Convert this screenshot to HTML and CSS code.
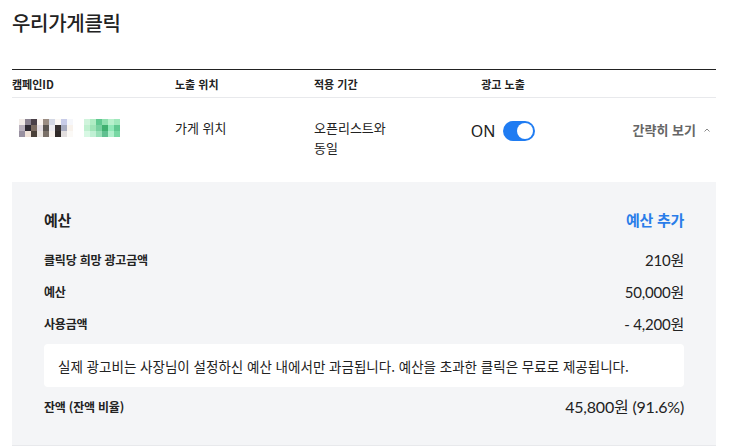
FILE: index.html
```html
<!DOCTYPE html>
<html lang="ko">

<head>
  <meta charset="UTF-8">
  <meta name="viewport" content="width=device-width, initial-scale=1">
  <title>우리가게클릭</title>
  <link rel="stylesheet" href="styles.css">
</head>

<body>
  <div id="page">
    <h1 class="title">우리가게클릭</h1>

    <div class="campaign">
      <div class="row head">
        <div>캠페인ID</div>
        <div>노출 위치</div>
        <div>적용 기간</div>
        <div class="center">광고 노출</div>
        <div></div>
      </div>

      <div class="row item">
        <div class="cid">
          <svg width="108" height="18" viewBox="0 0 108 18" aria-label="캠페인ID">
            <g>
              <rect x="0" y="0" width="6" height="6" fill="#f2ece8" />
              <rect x="6" y="0" width="6" height="6" fill="#8a8290" />
              <rect x="12" y="0" width="6" height="6" fill="#4a4048" />
              <rect x="18" y="0" width="6" height="6" fill="#faf4f0" />
              <rect x="24" y="0" width="6" height="6" fill="#9a8c82" />
              <rect x="30" y="0" width="6" height="6" fill="#d4d8e4" />
              <rect x="36" y="0" width="6" height="6" fill="#fbf8f5" />
              <rect x="42" y="0" width="6" height="6" fill="#c8cce8" />
              <rect x="48" y="0" width="6" height="6" fill="#f6f7fb" />
              <rect x="0" y="6" width="6" height="6" fill="#b8b0bc" />
              <rect x="6" y="6" width="6" height="6" fill="#2c2830" />
              <rect x="12" y="6" width="6" height="6" fill="#7a6a60" />
              <rect x="18" y="6" width="6" height="6" fill="#e4dee4" />
              <rect x="24" y="6" width="6" height="6" fill="#5a5450" />
              <rect x="30" y="6" width="6" height="6" fill="#ecebf0" />
              <rect x="36" y="6" width="6" height="6" fill="#363030" />
              <rect x="42" y="6" width="6" height="6" fill="#a8acc0" />
              <rect x="48" y="6" width="6" height="6" fill="#f8f2ec" />
              <rect x="0" y="12" width="6" height="6" fill="#9890a0" />
              <rect x="6" y="12" width="6" height="6" fill="#f0e2d8" />
              <rect x="12" y="12" width="6" height="6" fill="#4a4038" />
              <rect x="18" y="12" width="6" height="6" fill="#ede8e4" />
              <rect x="24" y="12" width="6" height="6" fill="#7a7068" />
              <rect x="30" y="12" width="6" height="6" fill="#f6f1ec" />
              <rect x="36" y="12" width="6" height="6" fill="#2e2826" />
              <rect x="42" y="12" width="6" height="6" fill="#e2dede" />
              <rect x="48" y="12" width="6" height="6" fill="#fbf9f6" />
            </g>
            <g transform="translate(65 0)">
              <rect x="0" y="0" width="6" height="6" fill="#d0f4dc" />
              <rect x="6" y="0" width="6" height="6" fill="#b0ecc4" />
              <rect x="12" y="0" width="6" height="6" fill="#60c890" />
              <rect x="18" y="0" width="6" height="6" fill="#90e0b0" />
              <rect x="24" y="0" width="6" height="6" fill="#b8f0cc" />
              <rect x="30" y="0" width="6" height="6" fill="#a0e8bc" />
              <rect x="0" y="6" width="6" height="6" fill="#c0f0d0" />
              <rect x="6" y="6" width="6" height="6" fill="#a0e4b8" />
              <rect x="12" y="6" width="6" height="6" fill="#78d0a0" />
              <rect x="18" y="6" width="6" height="6" fill="#40b070" />
              <rect x="24" y="6" width="6" height="6" fill="#90e8b8" />
              <rect x="30" y="6" width="6" height="6" fill="#60c890" />
              <rect x="0" y="12" width="6" height="6" fill="#d8f8e4" />
              <rect x="6" y="12" width="6" height="6" fill="#c0f0d4" />
              <rect x="12" y="12" width="6" height="6" fill="#98e0b8" />
              <rect x="18" y="12" width="6" height="6" fill="#60c090" />
              <rect x="24" y="12" width="6" height="6" fill="#b0f0cc" />
              <rect x="30" y="12" width="6" height="6" fill="#78d8a4" />
            </g>
          </svg>
        </div>
        <div>가게 위치</div>
        <div class="period">오픈리스트와<br>동일</div>
        <div class="exposure">
          <span class="on-label">ON</span>
          <span class="toggle"><span class="knob"></span></span>
        </div>
        <div class="fold">
          간략히 보기
          <svg width="6" height="4" viewBox="0 0 6 4">
            <polyline points="0.5,3.5 3,1 5.5,3.5" fill="none" stroke="#888" stroke-width="1" />
          </svg>
        </div>
      </div>

      <div class="budget">
        <div class="budget-head">
          <span>예산</span>
          <span class="add">예산 추가</span>
        </div>
        <div class="line">
          <span class="label">클릭당 희망 광고금액</span>
          <span class="value">210원</span>
        </div>
        <div class="line">
          <span class="label">예산</span>
          <span class="value">50,000원</span>
        </div>
        <div class="line">
          <span class="label">사용금액</span>
          <span class="value">- 4,200원</span>
        </div>
        <div class="notice">실제 광고비는 사장님이 설정하신 예산 내에서만 과금됩니다. 예산을 초과한 클릭은 무료로 제공됩니다.</div>
        <div class="line balance">
          <span class="label">잔액 (잔액 비율)</span>
          <span class="value">45,800원 (91.6%)</span>
        </div>
      </div>
    </div>
  </div>
</body>

</html>
```

FILE: styles.css
```css
:root {
  --text: #222;
  --blue: #2a7de9;
  --panel: #f4f5f7;
  --line: #e8e9ec;
}

* {
  box-sizing: border-box;
}

body {
  margin: 0;
  font-family: 'Noto Sans CJK KR', 'Noto Sans', sans-serif;
  color: var(--text);
  background-color: #fff;
}

#page {
  padding: 0 14px 0 12px;
}

.title {
  margin: 0;
  padding-top: 8px;
  font-size: 20px;
  line-height: 30px;
  font-weight: 500;
  letter-spacing: -0.3px;
}

.campaign {
  margin-top: 31px;
  border-top: 1px solid #222;
}

.row {
  display: grid;
  grid-template-columns: 163px 139px 126px 126px 1fr;
  align-items: start;
}

.row.head {
  height: 28px;
  align-items: center;
  border-bottom: 1px solid var(--line);
  font-size: 11px;
  font-weight: 700;
  letter-spacing: 0;
}

.center {
  text-align: center;
}

.row.item {
  padding: 20px 0 24px;
  font-size: 13px;
  line-height: 20px;
}

.cid {
  padding-left: 7px;
  height: 20px;
  display: flex;
  align-items: center;
}

.cid svg {
  display: block;
}

.exposure {
  display: flex;
  justify-content: center;
  align-items: center;
  gap: 8px;
  height: 22px;
  margin-top: 2px;
}

.on-label {
  font-family: 'Noto Sans', sans-serif;
  font-size: 16px;
}

.toggle {
  width: 32px;
  height: 20px;
  border-radius: 10px;
  background-color: #1f7cf2;
  display: flex;
  justify-content: flex-end;
  align-items: center;
  padding: 2px;
}

.knob {
  width: 16px;
  height: 16px;
  border-radius: 50%;
  background-color: #fff;
}

.fold {
  display: flex;
  justify-content: flex-end;
  align-items: center;
  gap: 8px;
  padding-right: 6px;
  margin-top: 2px;
  font-weight: 700;
  color: #666;
}

.budget {
  background-color: var(--panel);
  border-bottom: 1px solid var(--line);
  padding: 24px 32px 23px;
}

.budget-head {
  display: flex;
  justify-content: space-between;
  align-items: center;
  height: 26px;
  margin-bottom: 11px;
  font-size: 15px;
  font-weight: 700;
  letter-spacing: -0.3px;
}

.add {
  color: var(--blue);
}

.line {
  display: flex;
  justify-content: space-between;
  align-items: center;
  height: 32px;
}

.label {
  font-size: 12px;
  font-weight: 700;
  letter-spacing: -0.2px;
}

.value {
  font-family: Lato, 'Noto Sans CJK KR', sans-serif;
  font-size: 15px;
  letter-spacing: -0.2px;
}

.notice {
  margin: 5px 0 3px;
  background-color: #fff;
  border-radius: 4px;
  height: 43px;
  padding: 0 14px;
  display: flex;
  align-items: center;
  font-size: 13.5px;
}

.balance .value {
  font-size: 16px;
}
```
